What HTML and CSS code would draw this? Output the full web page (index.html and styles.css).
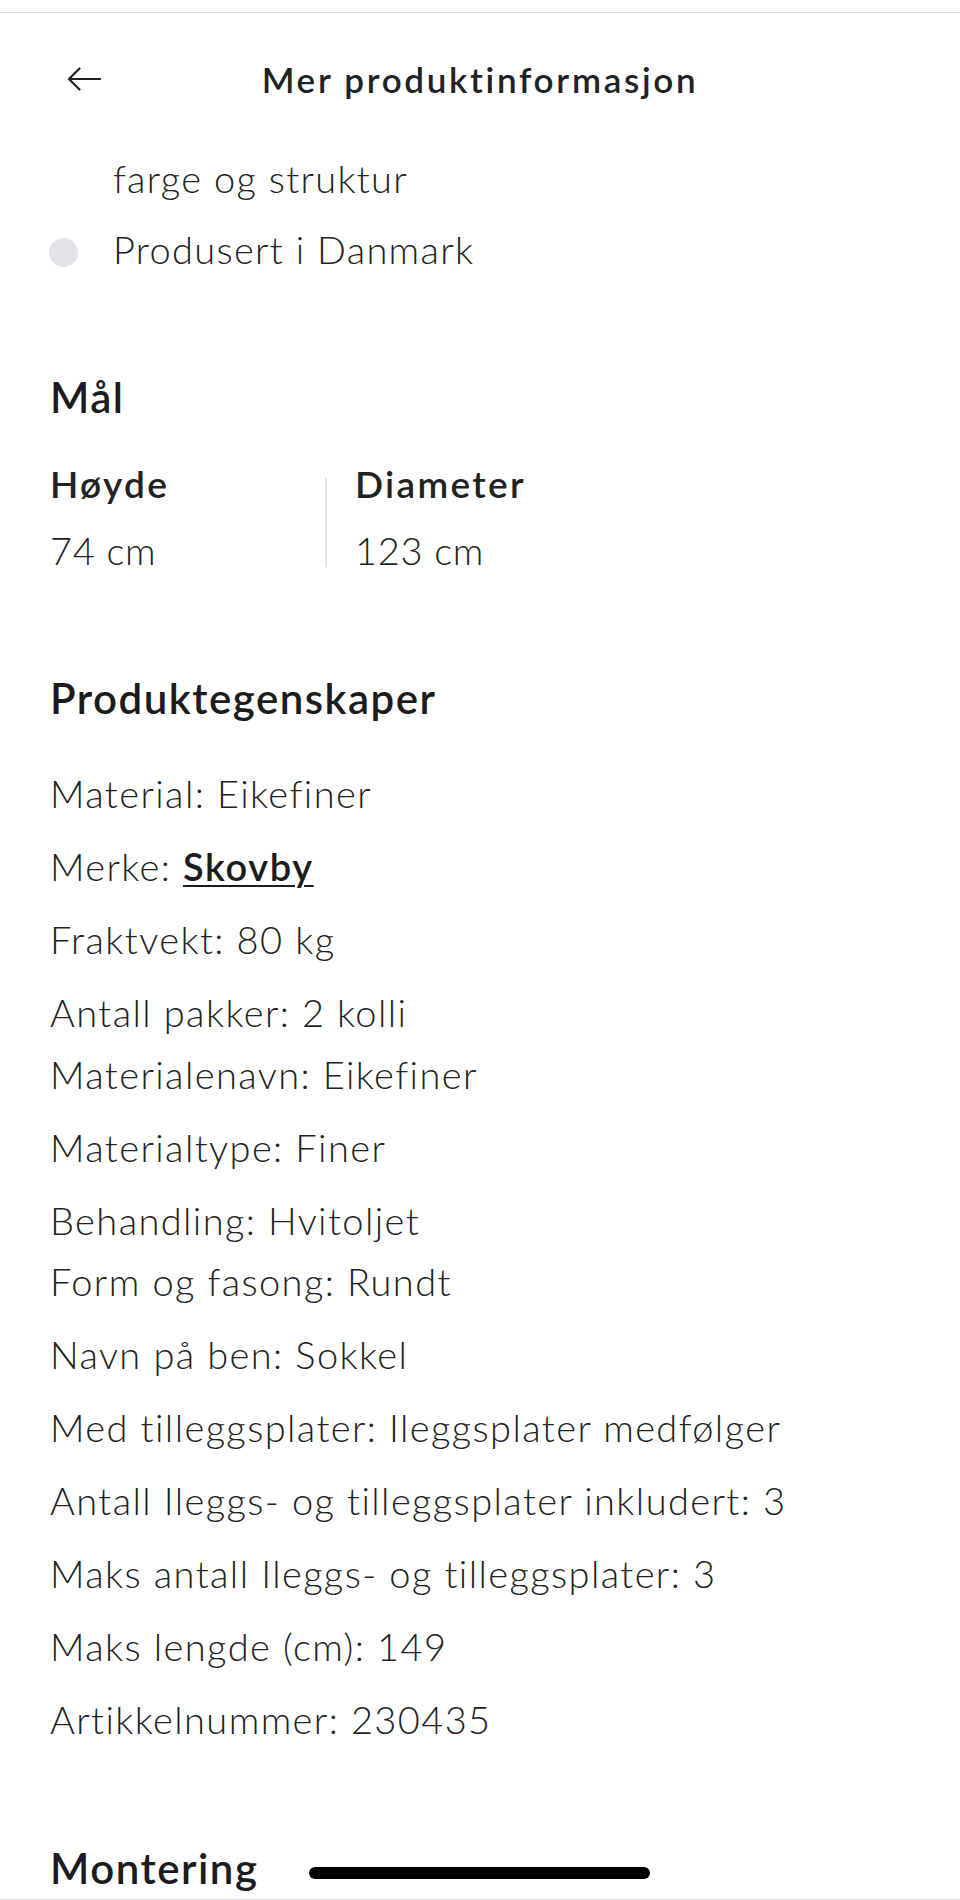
FILE: index.html
```html
<!DOCTYPE html>
<html lang="no">
<head>
<meta charset="utf-8">
<title>Mer produktinformasjon</title>
<link rel="stylesheet" href="styles.css">
</head>
<body>
<div class="screen">
  <div class="topline"></div>
  <header class="nav">
    <div class="nav-side">
      <svg class="back" width="34" height="24" viewBox="0 0 34 24" aria-hidden="true">
        <path d="M33 12H2M12.5 1.5L2 12l10.5 10.5" fill="none" stroke="#222" stroke-width="2.2" stroke-linecap="round" stroke-linejoin="round"/>
      </svg>
    </div>
    <h1 class="nav-title">Mer produktinformasjon</h1>
    <div class="nav-side"></div>
  </header>

  <ul class="bullets">
    <li class="cont">farge og struktur</li>
    <li class="dot">Produsert i Danmark</li>
  </ul>

  <section class="dims">
    <h2 class="heading">Mål</h2>
    <div class="dim-grid">
      <div class="dim">
        <div class="dim-label">Høyde</div>
        <div class="dim-value">74 cm</div>
      </div>
      <div class="dim-divider"></div>
      <div class="dim dim-right">
        <div class="dim-label">Diameter</div>
        <div class="dim-value">123 cm</div>
      </div>
    </div>
  </section>

  <section class="props">
    <h2 class="heading">Produktegenskaper</h2>
    <p>Material: Eikefiner</p>
    <p>Merke: <a class="brand" href="#">Skovby</a></p>
    <p>Fraktvekt: 80 kg</p>
    <p>Antall pakker: 2 kolli<br>Materialenavn: Eikefiner</p>
    <p>Materialtype: Finer</p>
    <p>Behandling: Hvitoljet<br>Form og fasong: Rundt</p>
    <p>Navn på ben: Sokkel</p>
    <p>Med tilleggsplater: Ileggsplater medfølger</p>
    <p>Antall Ileggs- og tilleggsplater inkludert: 3</p>
    <p>Maks antall Ileggs- og tilleggsplater: 3</p>
    <p>Maks lengde (cm): 149</p>
    <p>Artikkelnummer: 230435</p>
  </section>

  <section class="mount">
    <h2 class="heading">Montering</h2>
  </section>

  <div class="home-indicator"></div>
</div>
</body>
</html>
```

FILE: styles.css
```css
* { box-sizing: border-box; }

html, body {
  margin: 0;
  padding: 0;
  background: #ffffff;
}

body {
  font-family: "Lato", "Noto Sans", sans-serif;
  color: #222222;
}

.screen {
  position: relative;
  width: 960px;
  height: 1900px;
  overflow: hidden;
  border-bottom: 1px solid #dcdcdc;
}

.topline {
  margin-top: 12px;
  height: 1px;
  background: #dcdcdc;
}

/* Header */
.nav {
  display: flex;
  align-items: center;
  height: 137px;
  padding-bottom: 6px;
}

.nav-side {
  width: 101px;
  flex: 0 0 101px;
  padding-left: 67px;
  display: flex;
  align-items: center;
}

.back {
  display: block;
}

.nav-title {
  flex: 1;
  margin: 0;
  text-align: center;
  font-size: 35px;
  line-height: 44px;
  font-weight: 600;
  color: #1f2326;
  letter-spacing: 2.7px;
}

/* Bullet list */
.bullets {
  list-style: none;
  margin: 0;
  padding: 0 0 0 49px;
}

.bullets li {
  display: flex;
  align-items: center;
  font-size: 38px;
  font-weight: 300;
  letter-spacing: 1.3px;
  line-height: 56px;
  height: 56px;
}

.bullets li + li {
  margin-top: 15px;
}

.bullets .cont {
  padding-left: 64px;
}

.bullets .dot::before {
  content: "";
  flex: 0 0 29px;
  width: 29px;
  height: 29px;
  margin: 6px 35px 0 0;
  border-radius: 50%;
  background: #e1e3e6;
}

/* Headings */
.heading {
  margin: 0;
  font-size: 42px;
  line-height: 50px;
  font-weight: 600;
  letter-spacing: 1.5px;
  color: #1c1c1c;
}

/* Dimensions */
.dims {
  margin-top: 95px;
  padding-left: 50px;
}

.dim-grid {
  display: grid;
  grid-template-columns: 275px 2px 1fr;
  margin-top: 40px;
}

.dim-label {
  font-size: 37px;
  line-height: 44px;
  font-weight: 600;
  letter-spacing: 2.3px;
}

.dim-value {
  margin-top: 22px;
  font-size: 38px;
  line-height: 44px;
  font-weight: 300;
  letter-spacing: 0.7px;
}

.dim-divider {
  align-self: start;
  margin-top: 16px;
  height: 89px;
  background: #e6e6e6;
}

.dim-right {
  padding-left: 28px;
}

/* Properties */
.props {
  margin-top: 101px;
  padding-left: 50px;
}

.props .heading {
  margin-bottom: 40px;
}

.props p {
  margin: 0 0 11.5px;
  font-size: 38px;
  line-height: 61.5px;
  font-weight: 300;
  letter-spacing: 1.4px;
}

.brand {
  color: #1c1c1c;
  font-weight: 600;
  letter-spacing: 1.6px;
  text-decoration: underline;
  text-decoration-thickness: 2px;
  text-underline-offset: 4px;
}

/* Montering */
.mount {
  margin-top: 92px;
  padding-left: 50px;
}

/* iOS home indicator (overlay) */
.home-indicator {
  position: absolute;
  left: 309px;
  bottom: 20px;
  width: 341px;
  height: 12px;
  border-radius: 6px;
  background: #000000;
}
```
